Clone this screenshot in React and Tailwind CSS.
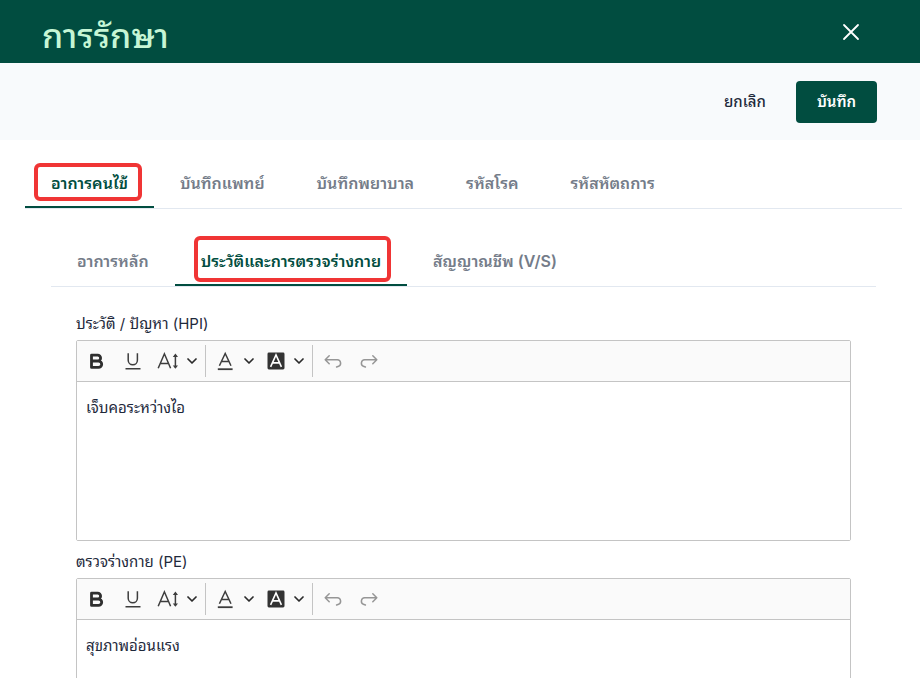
import React, { useState } from "react";

const visitTabs = [
  { id: "symptom", label: "อาการคนไข้" },
  { id: "doctor", label: "บันทึกแพทย์" },
  { id: "nurse", label: "บันทึกพยาบาล" },
  { id: "diagnosis", label: "รหัสโรค" },
  { id: "procedure", label: "รหัสหัตถการ" },
];

const symptomTabs = [
  { id: "chief", label: "อาการหลัก" },
  { id: "history", label: "ประวัติและการตรวจร่างกาย" },
  { id: "vital", label: "สัญญาณชีพ (V/S)" },
];

const Tabs = ({ tabs, active, onChange, markClass }) => (
  <div role="tablist" className="flex border-b border-[#e2e8f0]">
    {tabs.map((tab) => (
      <button
        key={tab.id}
        type="button"
        role="tab"
        aria-selected={active === tab.id}
        onClick={() => onChange(tab.id)}
        className={
          active === tab.id
            ? "relative h-[52px] px-[26px] pt-[3px] border-b-2 border-[#014d40] text-base text-[#014d40] font-semibold whitespace-nowrap"
            : "relative h-[52px] px-[26px] pt-[3px] border-b-2 border-transparent text-base text-[#747c89] font-semibold whitespace-nowrap"
        }
      >
        {tab.label}
        {active === tab.id && <span className={markClass} />}
      </button>
    ))}
  </div>
);

const Chevron = () => (
  <svg width="10" height="6" viewBox="0 0 10 6" fill="none" stroke="#2b2b2b" strokeWidth="1.7" strokeLinecap="round" strokeLinejoin="round">
    <path d="M1 1l4 4 4-4" />
  </svg>
);

const BoldIcon = () => (
  <svg width="20" height="20" viewBox="0 0 20 20" fill="none" stroke="#2f2f2f" strokeWidth="2.8" strokeLinejoin="round">
    <path d="M4.5 4.2h6.2a2.8 2.8 0 0 1 0 5.8H4.5zM4.5 10h7a3.2 3.2 0 0 1 0 6.4h-7z" />
  </svg>
);

const UnderlineIcon = () => (
  <svg width="20" height="20" viewBox="0 0 20 20" fill="none" stroke="#3d3d3d" strokeWidth="1.5">
    <path d="M5.2 2.2v7a4.6 4.6 0 0 0 9.2 0v-7M2.5 17.8h15" />
  </svg>
);

const FontSizeIcon = () => (
  <svg width="22" height="20" viewBox="0 0 22 20" fill="none" stroke="#3d3d3d" strokeWidth="1.5">
    <path d="M1.2 17.2L7.4 2.8l6.2 14.4M3.4 12.4h8M18.4 4v12.6" />
    <path d="M15.8 6l2.6-3.4L21 6zM15.8 14.4l2.6 3.4 2.6-3.4z" fill="#3d3d3d" stroke="none" />
  </svg>
);

const FontColorIcon = () => (
  <svg width="20" height="20" viewBox="0 0 20 20" fill="none" stroke="#3d3d3d" strokeWidth="1.5">
    <path d="M3.4 14.8L9.2 2.4 15 14.8M5.5 10.6h7.4" />
    <path d="M1.8 18.2h14.8" strokeWidth="1.8" />
  </svg>
);

const HighlightIcon = () => (
  <svg width="20" height="20" viewBox="0 0 20 20" fill="none">
    <rect x="1.5" y="1.5" width="17" height="17" rx="1.4" fill="#333" />
    <path d="M4.6 15.8L10 4l5.4 11.8M6.5 11.9h7" stroke="#fff" strokeWidth="1.6" />
  </svg>
);

const UndoIcon = ({ className }) => (
  <svg className={className} width="20" height="20" viewBox="0 0 20 20" fill="none" stroke="#969696" strokeWidth="1.5" strokeLinecap="round" strokeLinejoin="round">
    <path d="M6.2 4.8L2.2 8.8l4 4M2.2 8.8h12.2a3.4 3.4 0 0 1 1.2 6.5l-2 .7" />
  </svg>
);

const Separator = () => <span className="w-px h-8 bg-[#c4c4c4]" />;

const Editor = ({ id, label, text }) => {
  const [value, setValue] = useState(text);

  return (
    <div className="mb-[9px]">
      <label htmlFor={id} className="block h-6 leading-6 mb-1 text-[15px]">{label}</label>
      <div className="border border-[#c4c4c4] rounded-xs">
        <div className="flex items-center h-10 px-2 bg-[#fafafa]">
          <button type="button" aria-label="Bold" className="flex justify-center w-6"><BoldIcon /></button>
          <button type="button" aria-label="Underline" className="flex justify-center w-6 ml-3"><UnderlineIcon /></button>
          <button type="button" aria-label="Font size" className="flex items-center gap-2 ml-3"><FontSizeIcon /><Chevron /></button>
          <span className="w-2" />
          <Separator />
          <button type="button" aria-label="Font color" className="flex items-center gap-2 ml-2.5"><FontColorIcon /><Chevron /></button>
          <button type="button" aria-label="Highlight" className="flex items-center gap-2 ml-3"><HighlightIcon /><Chevron /></button>
          <span className="w-2" />
          <Separator />
          <button type="button" aria-label="Undo" className="flex justify-center w-6 ml-2"><UndoIcon /></button>
          <button type="button" aria-label="Redo" className="flex justify-center w-6 ml-3"><UndoIcon className="-scale-x-100" /></button>
        </div>
        <textarea
          id={id}
          value={value}
          onChange={(e) => setValue(e.target.value)}
          className="block w-full h-[159px] px-[9px] py-3 border-t border-[#c4c4c4] bg-white text-[15px] leading-7 resize-none outline-none"
        />
      </div>
    </div>
  );
};

const App = () => {
  const [visitTab, setVisitTab] = useState("symptom");
  const [symptomTab, setSymptomTab] = useState("history");

  return (
    <div className="h-screen overflow-y-auto [scrollbar-width:none] bg-white text-[#1e293b] text-[15px] font-['Inter','Noto_Sans_Thai_Looped','Loma','Noto_Sans',sans-serif]">
      <header className="flex items-center justify-between h-[63px] pl-[42px] pr-[60px] bg-[#014d40]">
        <h1 className="pt-2 text-[34px] leading-10 font-medium text-[#c6f6d5]">การรักษา</h1>
        <button type="button" aria-label="Close">
          <svg width="18" height="18" viewBox="0 0 18 18" fill="none" stroke="#fff" strokeWidth="1.8" strokeLinecap="round">
            <path d="M2 2l14 14M16 2L2 16" />
          </svg>
        </button>
      </header>

      <div className="flex items-center justify-end gap-[30px] h-[77px] pr-[43px] bg-[#f8fafc]">
        <button type="button" className="pt-0.5 font-medium">ยกเลิก</button>
        <button type="button" className="w-[81px] h-[42px] pt-0.5 rounded bg-[#014d40] text-white font-semibold">บันทึก</button>
      </div>

      <main className="pl-[25px] pr-[18px] pt-4">
        <Tabs
          tabs={visitTabs}
          active={visitTab}
          onChange={setVisitTab}
          markClass="absolute left-[9px] right-3 top-[7px] bottom-[5px] border-4 border-[#f03535] rounded-md"
        />
        <section className="px-[26px] pt-[25px]">
          <Tabs
            tabs={symptomTabs}
            active={symptomTab}
            onChange={setSymptomTab}
            markClass="absolute left-[19px] right-4 top-0.5 bottom-0.5 border-4 border-[#f03535] rounded-md"
          />
          <div className="px-[25px] pt-[25px]">
            <Editor id="hpi" label="ประวัติ / ปัญหา (HPI)" text="เจ็บคอระหว่างไอ" />
            <Editor id="pe" label="ตรวจร่างกาย (PE)" text="สุขภาพอ่อนแรง" />
          </div>
        </section>
      </main>
    </div>
  );
};

export default App;
